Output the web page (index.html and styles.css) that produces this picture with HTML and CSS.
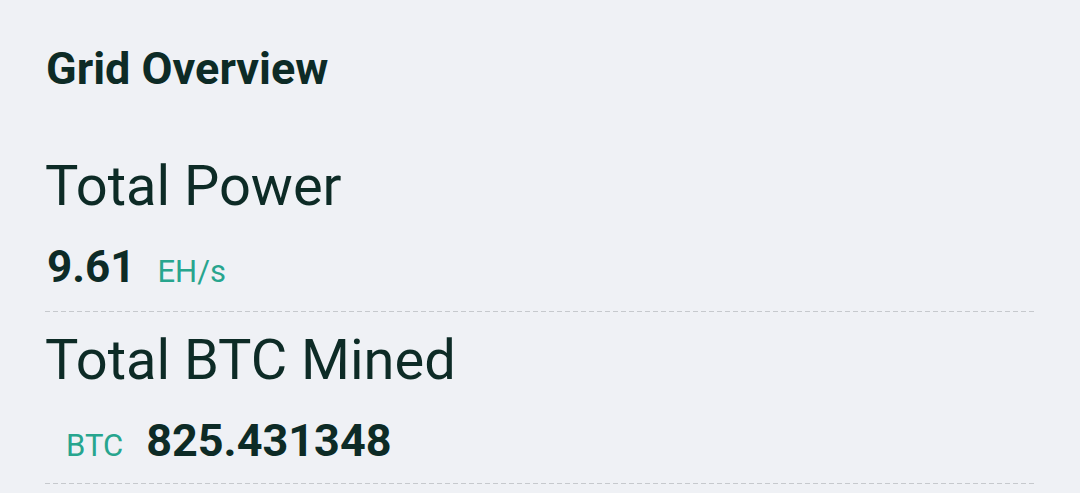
FILE: index.html
```html
<!DOCTYPE html>
<html lang="en">
<head>
<meta charset="utf-8">
<title>Grid Overview</title>
<link rel="stylesheet" href="styles.css">
</head>
<body>
<main class="overview">
  <h1 class="title">Grid Overview</h1>
  <section class="metric metric-power">
    <h2 class="metric-label">Total Power</h2>
    <div class="metric-value">
      <span class="number">9.61</span>
      <span class="unit">EH/s</span>
    </div>
  </section>
  <section class="metric metric-mined">
    <h2 class="metric-label">Total BTC Mined</h2>
    <div class="metric-value indented">
      <span class="unit">BTC</span>
      <span class="number big">825.431348</span>
    </div>
  </section>
</main>
</body>
</html>
```
FILE: styles.css
```css
html, body {
  margin: 0;
  padding: 0;
  background: #eff1f5;
}
body {
  font-family: Roboto, "Noto Sans", "Liberation Sans", sans-serif;
  color: #0d2b26;
  width: 1080px;
  height: 493px;
  overflow: hidden;
}
.overview {
  padding: 44px 45px 0 45px;
}
.title {
  margin: 0;
  font-size: 45px;
  line-height: 50px;
  font-weight: 700;
  padding-left: 1px;
}
.metric {
  background: repeating-linear-gradient(to right, #c6c9cd 0 5px, transparent 5px 8px) left bottom / 100% 1px no-repeat;
}
.metric-power {
  margin-top: 58px;
  padding-bottom: 14px;
}
.metric-mined {
  padding-top: 14px;
  padding-bottom: 12px;
}
.metric-label {
  margin: 0;
  font-size: 56px;
  line-height: 68px;
  font-weight: 400;
}
.metric-value {
  margin-top: 21px;
  display: flex;
  align-items: baseline;
  gap: 22px;
  line-height: 52px;
  padding-left: 2px;
}
.metric-value.indented {
  padding-left: 21px;
  gap: 23px;
}
.number {
  font-size: 44px;
  font-weight: 700;
}
.number.big {
  font-size: 45px;
}
.unit {
  font-size: 31px;
  font-weight: 400;
  color: #27a58e;
}
```
